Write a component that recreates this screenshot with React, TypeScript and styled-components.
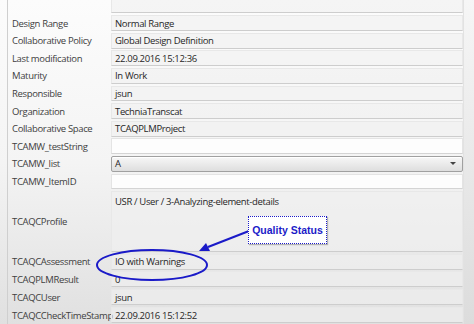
import React from 'react';
import styled, { createGlobalStyle, css } from 'styled-components';

const GlobalStyle = createGlobalStyle`
  html, body {
    margin: 0;
    padding: 0;
    background: #f2f2f2;
  }
  body {
    font-family: "Open Sans", "Noto Sans", sans-serif;
  }
`;

const Screen = styled.div`
  position: relative;
  width: 474px;
  height: 324px;
  overflow: hidden;
  display: flex;
  background: linear-gradient(#fcfcfc 0%, #f4f4f4 50%, #e0e0e0 100%);
`;

const Gutter = styled.div`
  width: 7px;
  border-right: 1px solid #cfcfcf;
`;

const Panel = styled.div`
  width: 455px;
  border-right: 1px solid #e2e2e2;
  margin-top: -3.2px;
  display: flex;
  flex-direction: column;
`;

const Side = styled.div`
  flex: 1;
  background: linear-gradient(#f6f6f6, #dcdcdc);
`;

const Row = styled.div<{ $h?: number }>`
  display: grid;
  grid-template-columns: 103px 1fr;
  height: ${p => p.$h ?? 17.6}px;
  flex-shrink: 0;
`;

const Label = styled.div`
  display: flex;
  align-items: center;
  padding-left: 4px;
  font-size: 9.5px;
  letter-spacing: -0.35px;
  color: #404040;
  white-space: nowrap;
`;

type Kind = 'read' | 'edit' | 'select';

const Field = styled.div<{ $kind?: Kind; $top?: boolean }>`
  display: flex;
  align-items: ${p => (p.$top ? 'flex-start' : 'center')};
  box-sizing: border-box;
  margin: 0.8px 0 1px 0;
  padding: ${p => (p.$top ? '3px' : '0')} 4px 0 3px;
  font-size: 9.5px;
  letter-spacing: -0.35px;
  color: #262626;
  white-space: nowrap;
  border: 1px solid #e8e8e8;
  border-bottom: 1px solid #cdcdcd;
  background: rgba(240, 240, 240, 0.6);
  ${p =>
    p.$kind === 'edit' &&
    css`
      background: #fdfdfd;
      border-color: #e4e4e4;
      border-bottom-color: #d4d4d4;
    `}
  ${p =>
    p.$kind === 'select' &&
    css`
      justify-content: space-between;
      border: 1px solid #a0a0a0;
      border-radius: 2px;
      background: linear-gradient(#f7f7f7, #dedede);
      box-shadow: inset 0 1px 0 #fff;
    `}
`;

const Caret = styled.span`
  width: 0;
  height: 0;
  border-left: 3px solid transparent;
  border-right: 3px solid transparent;
  border-top: 3px solid #444;
  margin-right: 2px;
`;

const Callout = styled.div`
  position: absolute;
  left: 248px;
  top: 216px;
  width: 79px;
  height: 28px;
  box-sizing: border-box;
  border: 1px dotted #1c1cc8;
  background: #fff;
  box-shadow: 1px 1px 1px rgba(0, 0, 0, 0.25);
  display: flex;
  align-items: center;
  justify-content: center;
  font-family: "Liberation Sans", Arial, sans-serif;
  font-weight: bold;
  font-size: 10.5px;
  color: #1c1cc8;
`;

const Overlay = styled.svg`
  position: absolute;
  left: 0;
  top: 0;
  pointer-events: none;
`;

type Item = { label: string; value?: string; kind?: Kind };

const upper: Item[] = [
  { label: '' },
  { label: 'Design Range', value: 'Normal Range' },
  { label: 'Collaborative Policy', value: 'Global Design Definition' },
  { label: 'Last modification', value: '22.09.2016 15:12:36' },
  { label: 'Maturity', value: 'In Work' },
  { label: 'Responsible', value: 'jsun' },
  { label: 'Organization', value: 'TechniaTranscat' },
  { label: 'Collaborative Space', value: 'TCAQPLMProject' },
  { label: 'TCAMW_testString', kind: 'edit' },
  { label: 'TCAMW_list', value: 'A', kind: 'select' },
  { label: 'TCAMW_ItemID', kind: 'edit' },
];

const lower: Item[] = [
  { label: 'TCAQCAssessment', value: 'IO with Warnings' },
  { label: 'TCAQPLMResult', value: '0' },
  { label: 'TCAQCUser', value: 'jsun' },
  { label: 'TCAQCCheckTimeStamp', value: '22.09.2016 15:12:52' },
];

const App: React.FC = () => {
  return (
    <Screen>
      <GlobalStyle />
      <Gutter />
      <Panel>
        {upper.map(it => (
          <Row key={it.label}>
            <Label>{it.label}</Label>
            <Field $kind={it.kind}>
              {it.value}
              {it.kind === 'select' && <Caret />}
            </Field>
          </Row>
        ))}
        <Row $h={62.5}>
          <Label>TCAQCProfile</Label>
          <Field $top>USR / User / 3-Analyzing-element-details</Field>
        </Row>
        {lower.map(it => (
          <Row key={it.label} $h={17.8}>
            <Label>{it.label}</Label>
            <Field>{it.value}</Field>
          </Row>
        ))}
      </Panel>
      <Side />
      <Overlay width={474} height={324} viewBox="0 0 474 324">
        <ellipse cx={152} cy={265} rx={55} ry={15} fill="none" stroke="#1a1ac8" strokeWidth={2} />
        <line x1={249} y1={231} x2={208} y2={247} stroke="#1a1ac8" strokeWidth={2} />
        <polygon points="199,251 206,243 210,251" fill="#1a1ac8" />
      </Overlay>
      <Callout>Quality Status</Callout>
    </Screen>
  );
};

export default App;
